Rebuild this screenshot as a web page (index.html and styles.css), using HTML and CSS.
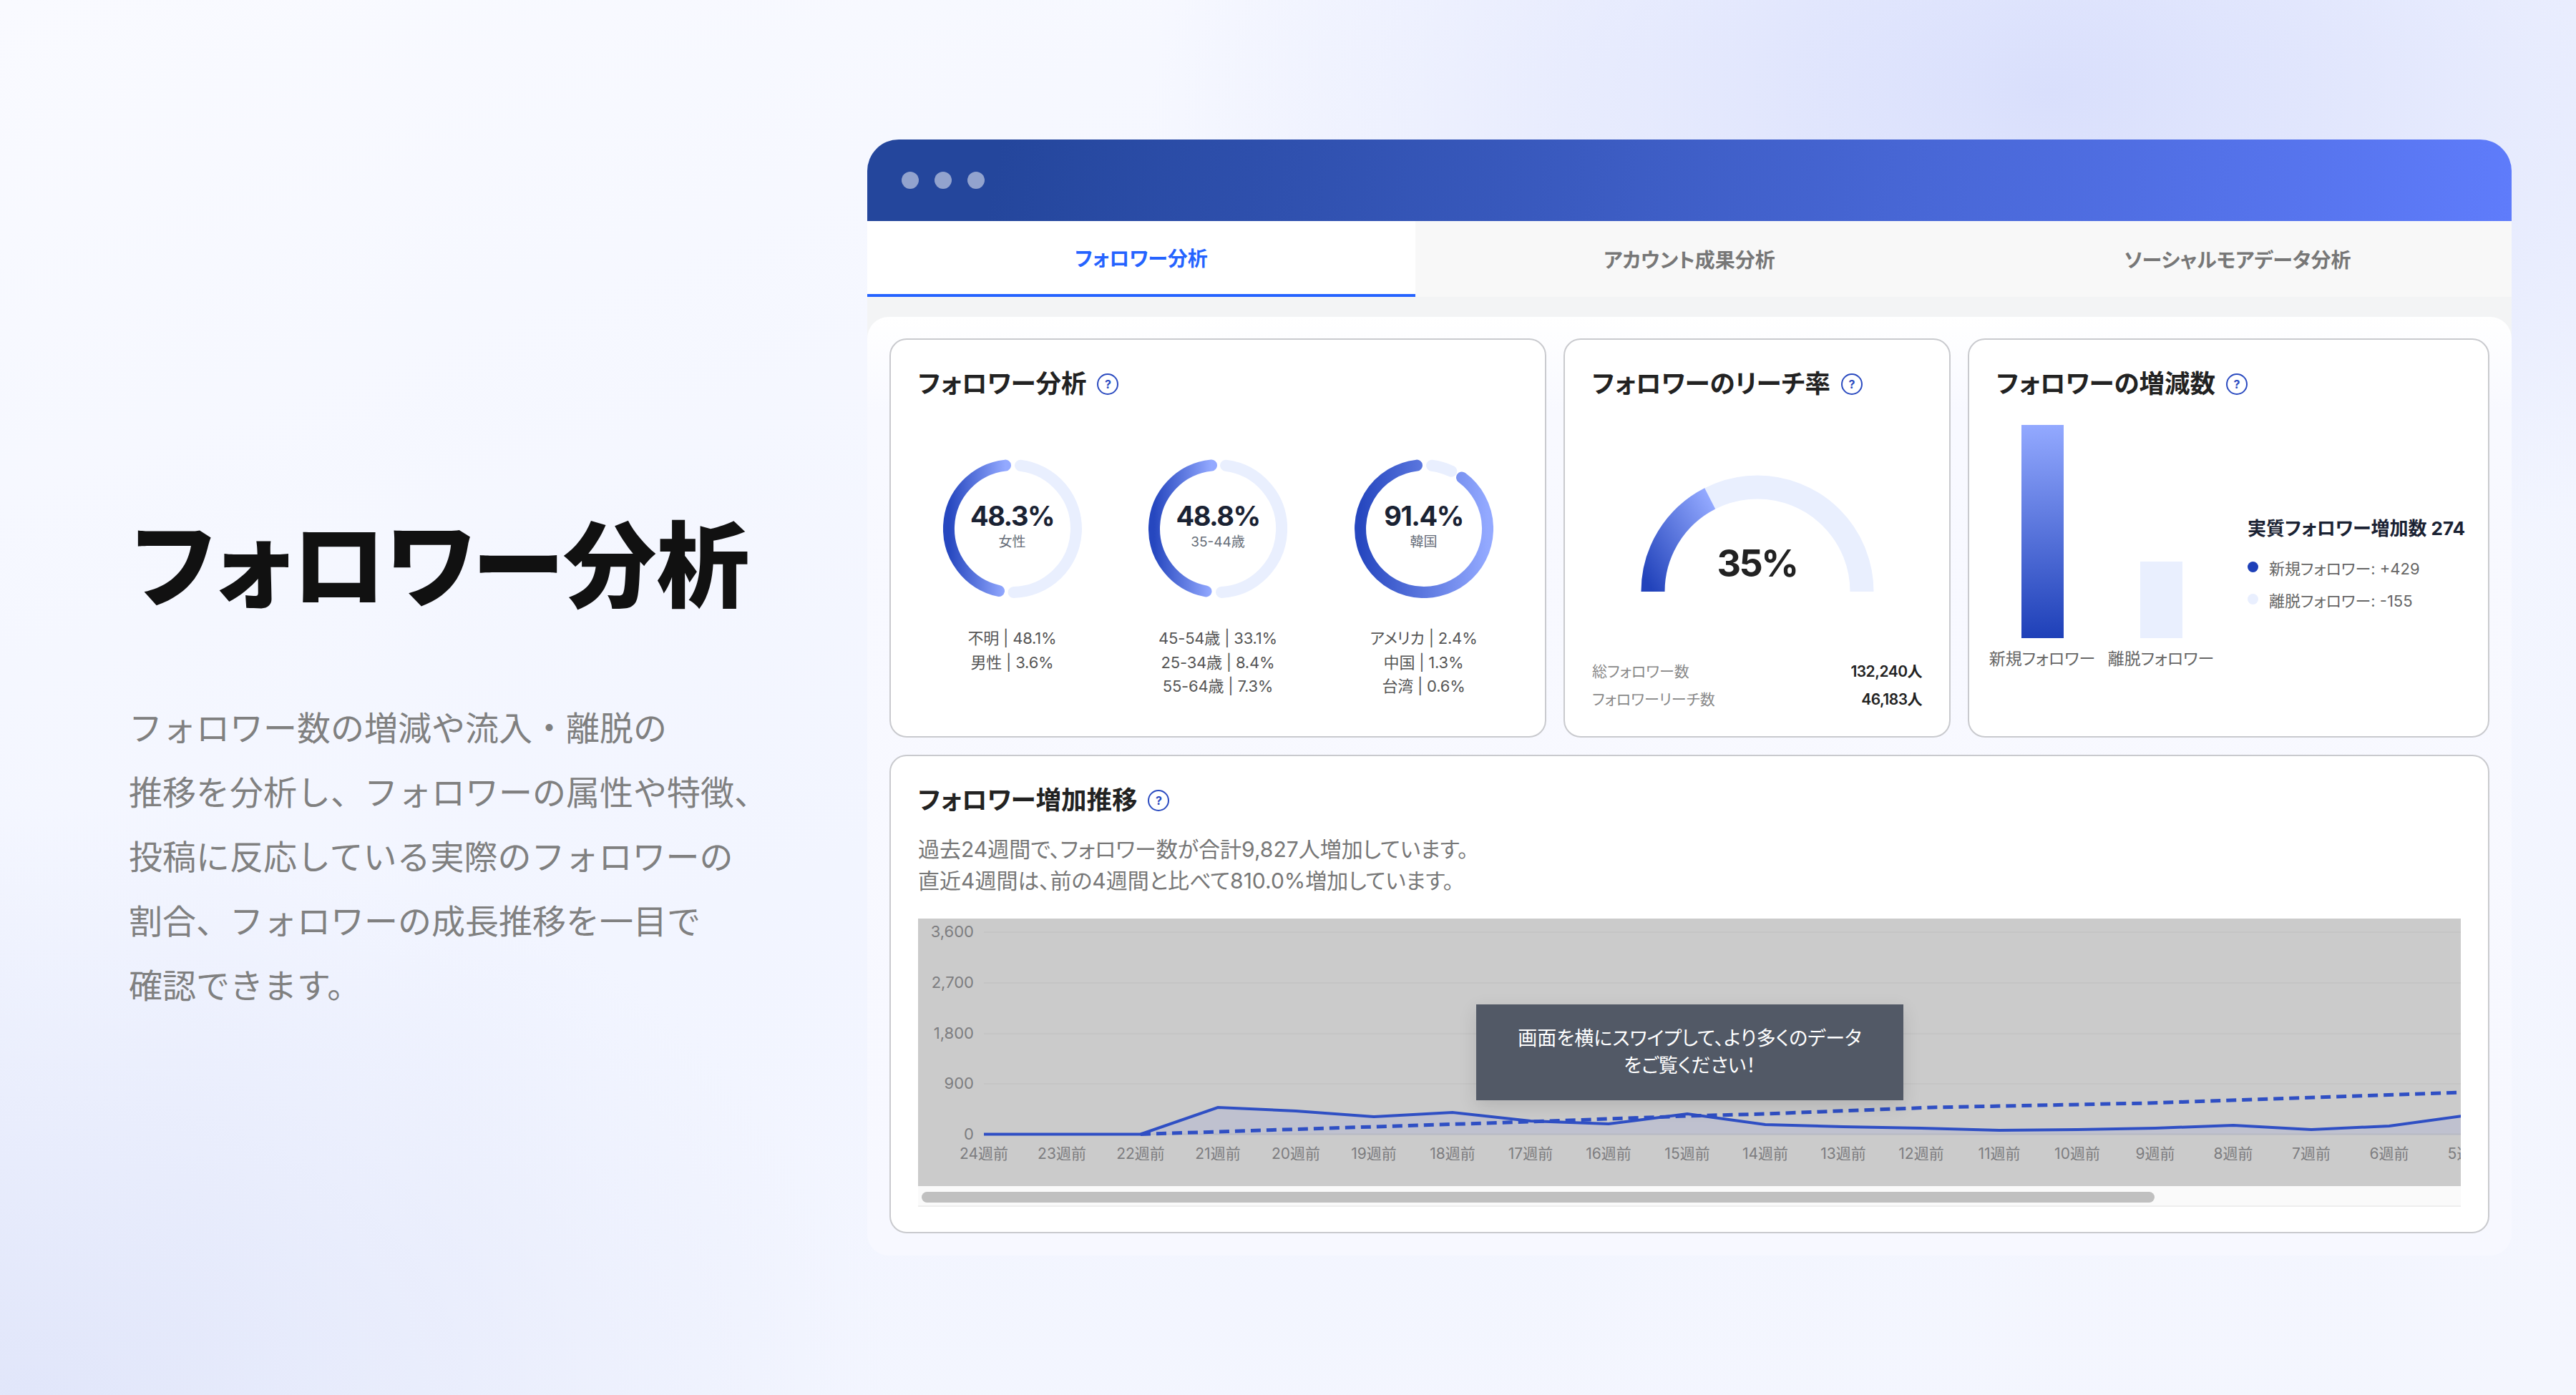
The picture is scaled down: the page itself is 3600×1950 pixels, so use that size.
FILE: index.html
```html
<!DOCTYPE html>
<html lang="ja">
<head>
    <meta charset="UTF-8">
    <title>フォロワー分析</title>
    <link rel="stylesheet" href="styles.css">
</head>
<body>
    <section class="intro">
        <h1>フォロワー分析</h1>
        <p>フォロワー数の増減や流入・離脱の<br>推移を分析し、フォロワーの属性や特徴、<br>投稿に反応している実際のフォロワーの<br>割合、フォロワーの成長推移を一目で<br>確認できます。</p>
    </section>

    <main class="window">
        <div class="titlebar">
            <span class="dot"></span>
            <span class="dot"></span>
            <span class="dot"></span>
        </div>
        <nav class="tabs">
            <div class="tab active">フォロワー分析</div>
            <div class="tab">アカウント成果分析</div>
            <div class="tab">ソーシャルモアデータ分析</div>
        </nav>

        <div class="panel-wrap">
            <div class="panel">
                <div class="top-row">
                    <section class="card">
                        <h3 class="card-title">フォロワー分析 <span class="help">?</span></h3>
                        <div class="donuts">
                            <div class="donut">
                                <div class="donut-chart">
                                    <svg width="194" height="194" viewBox="0 0 194 194">
                                        <defs>
                                            <linearGradient id="ring"><stop offset="0" stop-color="#2647bf"/><stop offset="1" stop-color="#93a9ff"/></linearGradient>
                                        </defs>
                                        <path class="track" d="M108 8.7A89 89 0 0 1 98.6 186"/>
                                        <path class="arc" d="M87 8.6A89 89 0 0 0 78 184"/>
                                    </svg>
                                    <div class="donut-label"><strong>48.3%</strong><span>女性</span></div>
                                </div>
                                <ul class="donut-list">
                                    <li>不明 | 48.1%</li>
                                    <li>男性 | 3.6%</li>
                                </ul>
                            </div>
                            <div class="donut">
                                <div class="donut-chart">
                                    <svg width="194" height="194" viewBox="0 0 194 194">
                                        <path class="track" d="M108 8.7A89 89 0 0 1 102 185.9"/>
                                        <path class="arc" d="M88 8.5A89 89 0 0 0 80.5 184.5"/>
                                    </svg>
                                    <div class="donut-label"><strong>48.8%</strong><span>35-44歳</span></div>
                                </div>
                                <ul class="donut-list">
                                    <li>45-54歳 | 33.1%</li>
                                    <li>25-34歳 | 8.4%</li>
                                    <li>55-64歳 | 7.3%</li>
                                </ul>
                            </div>
                            <div class="donut">
                                <div class="donut-chart">
                                    <svg width="194" height="194" viewBox="0 0 194 194">
                                        <path class="track" d="M108 8.7A89 89 0 0 1 135.3 16.7"/>
                                        <path class="arc" d="M87 8.6A89 89 0 1 0 150 25.5"/>
                                    </svg>
                                    <div class="donut-label"><strong>91.4%</strong><span>韓国</span></div>
                                </div>
                                <ul class="donut-list">
                                    <li>アメリカ | 2.4%</li>
                                    <li>中国 | 1.3%</li>
                                    <li>台湾 | 0.6%</li>
                                </ul>
                            </div>
                        </div>
                    </section>

                    <section class="card">
                        <h3 class="card-title">フォロワーのリーチ率 <span class="help">?</span></h3>
                        <div class="gauge">
                            <svg width="326" height="164" viewBox="0 0 326 164">
                                <defs>
                                    <linearGradient id="gaugeFill" x1="0" y1="1" x2="1" y2="0"><stop offset="0" stop-color="#2243bb"/><stop offset="1" stop-color="#93a9ff"/></linearGradient>
                                </defs>
                                <path class="gauge-track" d="M17 163A146 146 0 0 1 309 163"/>
                                <path class="gauge-arc" d="M17 163A146 146 0 0 1 96.7 32.9"/>
                            </svg>
                            <div class="gauge-value">35%</div>
                        </div>
                        <dl class="stats">
                            <div class="stat"><dt>総フォロワー数</dt><dd>132,240人</dd></div>
                            <div class="stat"><dt>フォロワーリーチ数</dt><dd>46,183人</dd></div>
                        </dl>
                    </section>

                    <section class="card">
                        <h3 class="card-title">フォロワーの増減数 <span class="help">?</span></h3>
                        <div class="bars-row">
                            <div class="bars">
                                <div class="bar-col">
                                    <div class="bar bar-new"></div>
                                    <div class="bar-name">新規フォロワー</div>
                                </div>
                                <div class="bar-col">
                                    <div class="bar bar-left"></div>
                                    <div class="bar-name">離脱フォロワー</div>
                                </div>
                            </div>
                            <div class="legend">
                                <div class="legend-title">実質フォロワー増加数 274</div>
                                <div class="legend-row"><span class="swatch swatch-new"></span>新規フォロワー: +429</div>
                                <div class="legend-row"><span class="swatch swatch-left"></span>離脱フォロワー: -155</div>
                            </div>
                        </div>
                    </section>
                </div>

                <section class="card">
                    <h3 class="card-title">フォロワー増加推移 <span class="help">?</span></h3>
                    <p class="summary">過去24週間で、フォロワー数が合計9,827人増加しています。<br>直近4週間は、前の4週間と比べて810.0%増加しています。</p>
                    <div class="chart">
                        <div class="chart-box">
                            <svg width="2158" height="374" viewBox="0 0 2158 374">
                                <g class="grid">
                                    <line x1="92" y1="19" x2="2158" y2="19"/>
                                    <line x1="92" y1="90" x2="2158" y2="90"/>
                                    <line x1="92" y1="161" x2="2158" y2="161"/>
                                    <line x1="92" y1="231" x2="2158" y2="231"/>
                                </g>
                                <path class="area" d="M92 301.5L311 301.5L419 264L528 269L637 277L747 271L856 283L965 287L1075 273L1184 288L1293 291L1402 293L1511 296L1620 295L1729 293L1838 289L1947 295L2056 290L2165 275L2165 301.5Z"/>
                                <line class="axis" x1="92" y1="301.5" x2="2158" y2="301.5"/>
                                <path class="line-solid" d="M92 301.5L311 301.5L419 264L528 269L637 277L747 271L856 283L965 287L1075 273L1184 288L1293 291L1402 293L1511 296L1620 295L1729 293L1838 289L1947 295L2056 290L2165 275"/>
                                <path class="line-dash" d="M311 301.5L419 298L637 291L856 284L1075 276L1184 273L1418 264L1718 258L2158 243"/>
                                <g class="y-labels">
                                    <text x="78" y="26">3,600</text>
                                    <text x="78" y="97">2,700</text>
                                    <text x="78" y="168">1,800</text>
                                    <text x="78" y="238">900</text>
                                    <text x="78" y="309">0</text>
                                </g>
                                <g class="x-labels">
                                    <text x="92" y="336">24週前</text>
                                    <text x="201" y="336">23週前</text>
                                    <text x="311" y="336">22週前</text>
                                    <text x="419" y="336">21週前</text>
                                    <text x="528" y="336">20週前</text>
                                    <text x="637" y="336">19週前</text>
                                    <text x="747" y="336">18週前</text>
                                    <text x="856" y="336">17週前</text>
                                    <text x="965" y="336">16週前</text>
                                    <text x="1075" y="336">15週前</text>
                                    <text x="1184" y="336">14週前</text>
                                    <text x="1293" y="336">13週前</text>
                                    <text x="1402" y="336">12週前</text>
                                    <text x="1511" y="336">11週前</text>
                                    <text x="1620" y="336">10週前</text>
                                    <text x="1729" y="336">9週前</text>
                                    <text x="1838" y="336">8週前</text>
                                    <text x="1947" y="336">7週前</text>
                                    <text x="2056" y="336">6週前</text>
                                    <text x="2165" y="336">5週前</text>
                                </g>
                            </svg>
                            <div class="swipe-hint">画面を横にスワイプして、より多くのデータ<br>をご覧ください！</div>
                        </div>
                        <div class="scrollbar"><div class="thumb"></div></div>
                    </div>
                </section>
            </div>
        </div>
    </main>
</body>
</html>
```

FILE: styles.css
```css
* {
    box-sizing: border-box;
}
html, body {
    margin: 0;
    height: 100%;
}
body {
    display: flex;
    justify-content: space-between;
    height: 1950px;
    overflow: hidden;
    padding: 195px 90px 0 180px;
    font-family: Inter, "Noto Sans CJK JP", sans-serif;
    font-feature-settings: "palt";
    color: #222;
    background:
        radial-gradient(1250px 720px at 2860px 130px, #d9dffc 0%, rgba(217, 223, 252, 0) 100%),
        radial-gradient(1200px 820px at 40px 1950px, #e1e6fa 0%, rgba(225, 230, 250, 0) 100%),
        linear-gradient(160deg, #f9faff 0%, #f2f5ff 50%, #f4f6fe 100%);
}

/* left column */
.intro {
    width: 900px;
    padding-top: 499px;
}
.intro h1 {
    margin: 0 0 0 5px;
    font-family: "Noto Sans CJK JP", sans-serif;
    font-size: 130px;
    font-weight: 900;
    line-height: 174px;
    color: #111;
}
.intro p {
    margin: 102px 0 0;
    font-family: "Noto Sans CJK JP", sans-serif;
    font-feature-settings: normal;
    font-size: 47px;
    font-weight: 400;
    line-height: 90px;
    color: #808080;
}

/* app window */
.window {
    width: 2298px;
    height: 1560px;
}
.titlebar {
    display: flex;
    align-items: center;
    gap: 22px;
    height: 114px;
    padding-left: 48px;
    border-radius: 44px 44px 0 0;
    background: linear-gradient(100deg, #24469c 0%, #24469c 8%, #5f7cfb 100%);
}
.dot {
    width: 24px;
    height: 24px;
    border-radius: 50%;
    background: rgba(255, 255, 255, 0.5);
}
.tabs {
    display: grid;
    grid-template-columns: repeat(3, 1fr);
    height: 106px;
    background: #f8f8f8;
}
.tab {
    display: flex;
    align-items: center;
    justify-content: center;
    font-size: 28px;
    font-weight: 700;
    color: #777;
}
.tab.active {
    background: #fff;
    color: #2563ff;
    border-bottom: 4px solid #2563ff;
}
.panel-wrap {
    padding-top: 28px;
    background: linear-gradient(#f3f4f5 0, #f3f4f5 60px, transparent 60px);
}
.panel {
    display: flex;
    flex-direction: column;
    gap: 24px;
    height: 1312px;
    padding: 30px 31px 31px;
    border-radius: 30px;
    background: linear-gradient(#fff 0, #f8f9ff 10%, #f7f8ff 100%);
}
.top-row {
    display: grid;
    grid-template-columns: 918px 541px 1fr;
    gap: 24px;
    height: 558px;
}
.card {
    flex: 1;
    min-width: 0;
    padding: 42px 38px 0;
    border: 2px solid #c9cace;
    border-radius: 24px;
    background: #fff;
}
.card-title {
    display: flex;
    align-items: center;
    gap: 15px;
    margin: 0;
    font-size: 35.5px;
    font-weight: 700;
    line-height: 40px;
    color: #222;
}
.help {
    display: flex;
    align-items: center;
    justify-content: center;
    width: 30px;
    height: 30px;
    border: 2px solid #2b4bc0;
    border-radius: 50%;
    font-size: 16px;
    font-weight: 700;
    color: #2b4bc0;
}

/* donuts */
.donuts {
    display: grid;
    grid-template-columns: repeat(3, 287.5px);
    justify-content: center;
    margin: 85px -38px 0;
}
.donut {
    display: flex;
    flex-direction: column;
    align-items: center;
}
.donut-chart {
    display: grid;
    place-items: center;
}
.donut-chart svg, .donut-label {
    grid-area: 1 / 1;
}
.donut-label {
    display: flex;
    flex-direction: column;
    align-items: center;
    margin-top: -8px;
}
.donut-label strong {
    font-size: 38px;
    font-weight: 700;
    letter-spacing: -1.5px;
    line-height: 44px;
    color: #1a2233;
}
.donut-label span {
    margin-top: 2px;
    font-size: 19px;
    line-height: 26px;
    color: #666d78;
}
.track {
    fill: none;
    stroke: #e9effe;
    stroke-width: 16;
    stroke-linecap: round;
}
.arc {
    fill: none;
    stroke: url(#ring);
    stroke-width: 16;
    stroke-linecap: round;
}
.donut-list {
    margin: 40px 0 0;
    padding: 0;
    list-style: none;
    text-align: center;
    font-size: 22px;
    letter-spacing: -0.2px;
    line-height: 33.5px;
    color: #555;
}

/* reach gauge */
.gauge {
    display: grid;
    justify-items: center;
    margin-top: 107px;
}
.gauge svg, .gauge-value {
    grid-area: 1 / 1;
}
.gauge-value {
    align-self: end;
    margin-bottom: 8px;
    font-size: 52px;
    font-weight: 700;
    letter-spacing: -2.5px;
    line-height: 64px;
    color: #222;
}
.gauge-track {
    fill: none;
    stroke: #e9effe;
    stroke-width: 33;
}
.gauge-arc {
    fill: none;
    stroke: url(#gaugeFill);
    stroke-width: 33;
}
.stats {
    margin: 89px 0 0;
}
.stat {
    display: flex;
    justify-content: space-between;
    align-items: center;
    height: 39px;
}
.stat dt {
    font-size: 21px;
    color: #888;
}
.stat dd {
    margin: 0;
    font-size: 21px;
    font-weight: 600;
    letter-spacing: -0.5px;
    color: #222;
}

/* increase / decrease bars */
.bars-row {
    display: flex;
    margin: 37px 0 0 -19px;
}
.bars {
    display: flex;
}
.bar-col {
    display: flex;
    flex-direction: column;
    align-items: center;
    width: 166px;
    height: 344px;
}
.bar {
    width: 59px;
    margin-top: auto;
}
.bar-new {
    height: 298px;
    background: linear-gradient(#93a9ff, #1e40b8);
}
.bar-left {
    height: 107px;
    background: #e9effe;
}
.bar-name {
    width: 100%;
    margin-top: 12px;
    text-align: center;
    font-size: 23px;
    line-height: 34px;
    white-space: nowrap;
    color: #666;
}
.legend {
    margin: 128px 0 0 38px;
}
.legend-title {
    margin-bottom: 14px;
    font-size: 26px;
    font-weight: 700;
    line-height: 34px;
    white-space: nowrap;
    color: #1a2233;
}
.legend-row {
    display: flex;
    align-items: center;
    gap: 15px;
    height: 45px;
    font-size: 22px;
    white-space: nowrap;
    color: #666;
}
.swatch {
    width: 15px;
    height: 15px;
    border-radius: 50%;
}
.swatch-new {
    background: #1e40b8;
}
.swatch-left {
    background: #e9effe;
}

/* growth chart */
.summary {
    margin: 26px 0 0;
    font-size: 30px;
    line-height: 44px;
    color: #777;
}
.chart {
    margin-top: 31px;
}
.chart-box {
    position: relative;
    height: 374px;
    overflow: hidden;
    background: #cbcbcb;
}
.chart-box svg {
    display: block;
}
.grid line {
    stroke: #c5c5c5;
    stroke-width: 2;
}
.axis {
    stroke: #b7b9c3;
    stroke-width: 2;
}
.area {
    fill: #bfc1cf;
}
.line-solid {
    fill: none;
    stroke: #2f4fc4;
    stroke-width: 4;
}
.line-dash {
    fill: none;
    stroke: #2f4fc4;
    stroke-width: 5;
    stroke-dasharray: 14 8;
}
.y-labels text {
    font-size: 22px;
    fill: #7d7d80;
    text-anchor: end;
}
.x-labels text {
    font-size: 21px;
    fill: #7d7d80;
    text-anchor: middle;
}
.swipe-hint {
    position: absolute;
    left: 780px;
    top: 120px;
    display: flex;
    align-items: center;
    justify-content: center;
    width: 597px;
    height: 134px;
    text-align: center;
    font-size: 27px;
    line-height: 38px;
    color: #fff;
    background: #525966;
    box-shadow: 0 8px 24px rgba(0, 0, 0, 0.12);
}
.scrollbar {
    height: 29px;
    padding: 8px 5px 6px;
    background: #fafafa;
    border-bottom: 2px solid #eee;
}
.thumb {
    width: 1723px;
    height: 15px;
    border-radius: 8px;
    background: #c0c0c0;
}
```
